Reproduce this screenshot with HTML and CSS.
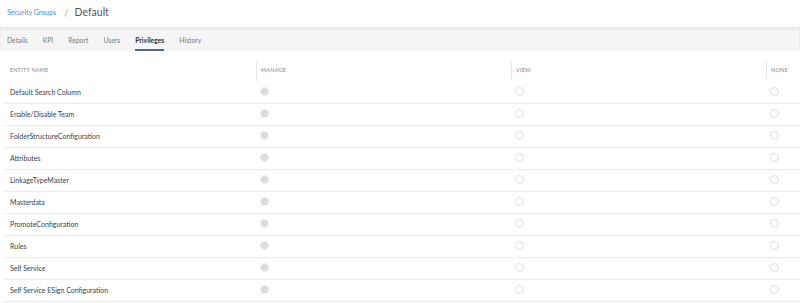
FILE: index.html
```html
<!DOCTYPE html>
<html lang="en">
<head>
    <meta charset="UTF-8">
    <meta name="viewport" content="width=device-width, initial-scale=1.0">
    <title>Security Groups - Default</title>
    <link rel="stylesheet" href="styles.css">
</head>
<body>
    <div class="page-head">
        <a class="crumb" href="#">Security Groups</a>
        <span class="sep">/</span>
        <span class="title">Default</span>
    </div>

    <div class="tabs">
        <div class="tab">Details</div>
        <div class="tab">KPI</div>
        <div class="tab">Report</div>
        <div class="tab">Users</div>
        <div class="tab active">Privileges</div>
        <div class="tab">History</div>
    </div>

    <div class="grid">
        <div class="grid-head">
            <div class="col first">Entity Name</div>
            <div class="col">Manage</div>
            <div class="col">View</div>
            <div class="col">None</div>
        </div>

        <div class="row">
            <div class="cell name">Default Search Column</div>
            <div class="cell"><span class="radio checked"></span></div>
            <div class="cell"><span class="radio"></span></div>
            <div class="cell"><span class="radio"></span></div>
        </div>
        <div class="row">
            <div class="cell name">Enable/Disable Team</div>
            <div class="cell"><span class="radio checked"></span></div>
            <div class="cell"><span class="radio"></span></div>
            <div class="cell"><span class="radio"></span></div>
        </div>
        <div class="row">
            <div class="cell name">FolderStructureConfiguration</div>
            <div class="cell"><span class="radio checked"></span></div>
            <div class="cell"><span class="radio"></span></div>
            <div class="cell"><span class="radio"></span></div>
        </div>
        <div class="row">
            <div class="cell name">Attributes</div>
            <div class="cell"><span class="radio checked"></span></div>
            <div class="cell"><span class="radio"></span></div>
            <div class="cell"><span class="radio"></span></div>
        </div>
        <div class="row">
            <div class="cell name">LinkageTypeMaster</div>
            <div class="cell"><span class="radio checked"></span></div>
            <div class="cell"><span class="radio"></span></div>
            <div class="cell"><span class="radio"></span></div>
        </div>
        <div class="row">
            <div class="cell name">Masterdata</div>
            <div class="cell"><span class="radio checked"></span></div>
            <div class="cell"><span class="radio"></span></div>
            <div class="cell"><span class="radio"></span></div>
        </div>
        <div class="row">
            <div class="cell name">PromoteConfiguration</div>
            <div class="cell"><span class="radio checked"></span></div>
            <div class="cell"><span class="radio"></span></div>
            <div class="cell"><span class="radio"></span></div>
        </div>
        <div class="row">
            <div class="cell name">Rules</div>
            <div class="cell"><span class="radio checked"></span></div>
            <div class="cell"><span class="radio"></span></div>
            <div class="cell"><span class="radio"></span></div>
        </div>
        <div class="row">
            <div class="cell name">Self Service</div>
            <div class="cell"><span class="radio checked"></span></div>
            <div class="cell"><span class="radio"></span></div>
            <div class="cell"><span class="radio"></span></div>
        </div>
        <div class="row">
            <div class="cell name">Self Service ESign Configuration</div>
            <div class="cell"><span class="radio checked"></span></div>
            <div class="cell"><span class="radio"></span></div>
            <div class="cell"><span class="radio"></span></div>
        </div>
    </div>
</body>
</html>
```

FILE: styles.css
```css
* {
    margin: 0;
    padding: 0;
    box-sizing: border-box;
    font-family: Lato, 'Liberation Sans', sans-serif;
}

body {
    background-color: #fff;
    overflow: hidden;
}

.page-head {
    height: 27px;
    display: flex;
    align-items: center;
    padding-left: 7px;
    padding-bottom: 3px;
}

.crumb {
    color: #3d8fd6;
    font-size: 7px;
    text-decoration: none;
}

.sep {
    color: #aaa;
    font-size: 10px;
    margin: 0 6px 0 8px;
}

.title {
    color: #555;
    font-size: 10.5px;
}

.tabs {
    height: 24px;
    display: flex;
    gap: 15px;
    padding-left: 7px;
    background-color: #f5f5f5;
    box-shadow: inset 0 2px 3px rgba(0, 0, 0, 0.07);
}

.tab {
    display: flex;
    align-items: center;
    color: #777;
    font-size: 6.8px;
    border-bottom: 2px solid transparent;
    padding-top: 3px;
}

.tab.active {
    color: #333;
    font-weight: bold;
    border-bottom-color: #4e6b8c;
}

.grid {
    padding: 10px 0 0 4px;
}

.grid-head,
.row {
    display: grid;
    grid-template-columns: 252px 255px 255px 1fr;
}

.grid-head {
    height: 21px;
}

.col {
    height: 18px;
    display: flex;
    align-items: center;
    padding-left: 4px;
    border-left: 1px solid #e6e6e6;
    color: #888;
    font-size: 5.5px;
    text-transform: uppercase;
    letter-spacing: 0.2px;
}

.col.first {
    border-left: none;
    padding-left: 6px;
}

.row {
    height: 22px;
    border-bottom: 1px solid #ececec;
}

.cell {
    display: flex;
    align-items: center;
    padding-left: 4px;
    padding-bottom: 2px;
}

.cell.name {
    padding-left: 6px;
    color: #39414c;
    font-size: 7px;
}

.radio {
    width: 9px;
    height: 9px;
    border-radius: 50%;
    border: 1px solid #dedede;
    background-color: #fff;
}

.radio.checked {
    background-color: #dcdcdc;
    border-color: #ebebeb;
}
```
